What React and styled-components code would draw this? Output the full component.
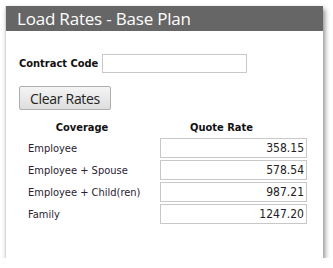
import React, { useState } from 'react'
import styled, { createGlobalStyle } from 'styled-components'

const GlobalStyle = createGlobalStyle`
    body{
        margin: 0;
        background: #fff;
        font-family: "DejaVu Sans Condensed", "Open Sans", sans-serif;
    }
`

const rates = [
    { coverage: 'Employee', rate: '358.15' },
    { coverage: 'Employee + Spouse', rate: '578.54' },
    { coverage: 'Employee + Child(ren)', rate: '987.21' },
    { coverage: 'Family', rate: '1247.20' },
]

const App = () => {
    const [code, setCode] = useState('')

    return (
        <>
            <GlobalStyle />
            <Panel>
                <Header>Load Rates - Base Plan</Header>
                <Body>
                    <CodeRow>
                        <Label>Contract Code</Label>
                        <CodeInput value={code} onChange={e=>setCode(e.target.value)} />
                    </CodeRow>
                    <ClearButton onClick={()=>setCode('')}>Clear Rates</ClearButton>
                    <RateGrid>
                        <ColHead>Coverage</ColHead>
                        <ColHead>Quote Rate</ColHead>
                        {rates.map(r=>(
                            <React.Fragment key={r.coverage}>
                                <Coverage>{r.coverage}</Coverage>
                                <RateInput defaultValue={r.rate} />
                            </React.Fragment>
                        ))}
                    </RateGrid>
                </Body>
            </Panel>
        </>
    )
}

const Panel = styled.div`
    margin: 6px 0 0 5px;
    width: 318px;
    height: 252px;
    box-sizing: border-box;
    background: #fff;
    border-left: 1px solid #d8d8d8;
    box-shadow: 2px 3px 5px rgba(0,0,0,.45);
    display: flex;
    flex-direction: column;
`

const Header = styled.div`
    height: 25px;
    background: #666;
    color: #fff;
    font-family: "Open Sans", sans-serif;
    font-size: 17px;
    line-height: 25px;
    padding-left: 11px;
    letter-spacing: -0.2px;
`

const Body = styled.div`
    padding: 23px 0 0 13px;
    display: flex;
    flex-direction: column;
    align-items: flex-start;
`

const CodeRow = styled.div`
    display: flex;
    align-items: center;
    gap: 4px;
`

const Label = styled.span`
    font-size: 11px;
    font-weight: bold;
    color: #111;
`

const CodeInput = styled.input`
    width: 145px;
    height: 19px;
    box-sizing: border-box;
    border: 1px solid #c8c8c8;
    padding: 0 3px;
    margin: 0;
    outline: none;
`

const ClearButton = styled.button`
    margin-top: 13px;
    width: 92px;
    height: 24px;
    border: 1px solid #adadad;
    border-radius: 2px;
    background: linear-gradient(#f4f4f4, #dedede);
    font-family: "Open Sans", sans-serif;
    font-size: 14px;
    color: #222;
    padding: 0;
    letter-spacing: -0.3px;
`

const RateGrid = styled.div`
    margin: 10px 0 0 9px;
    display: grid;
    grid-template-columns: 108px 171px;
    row-gap: 2px;
    align-items: center;
`

const ColHead = styled.div`
    font-size: 11px;
    font-weight: bold;
    color: #111;
    text-align: center;
    height: 16px;
    line-height: 16px;
`

const Coverage = styled.div`
    font-size: 11px;
    color: #2a2233;
    white-space: nowrap;
`

const RateInput = styled.input`
    justify-self: end;
    width: 147px;
    height: 20px;
    box-sizing: border-box;
    border: 1px solid #c8c8c8;
    margin: 0;
    padding: 0 2px;
    text-align: right;
    font-family: "DejaVu Sans Condensed", "Open Sans", sans-serif;
    font-size: 12px;
    color: #222;
    outline: none;
`

export default App
